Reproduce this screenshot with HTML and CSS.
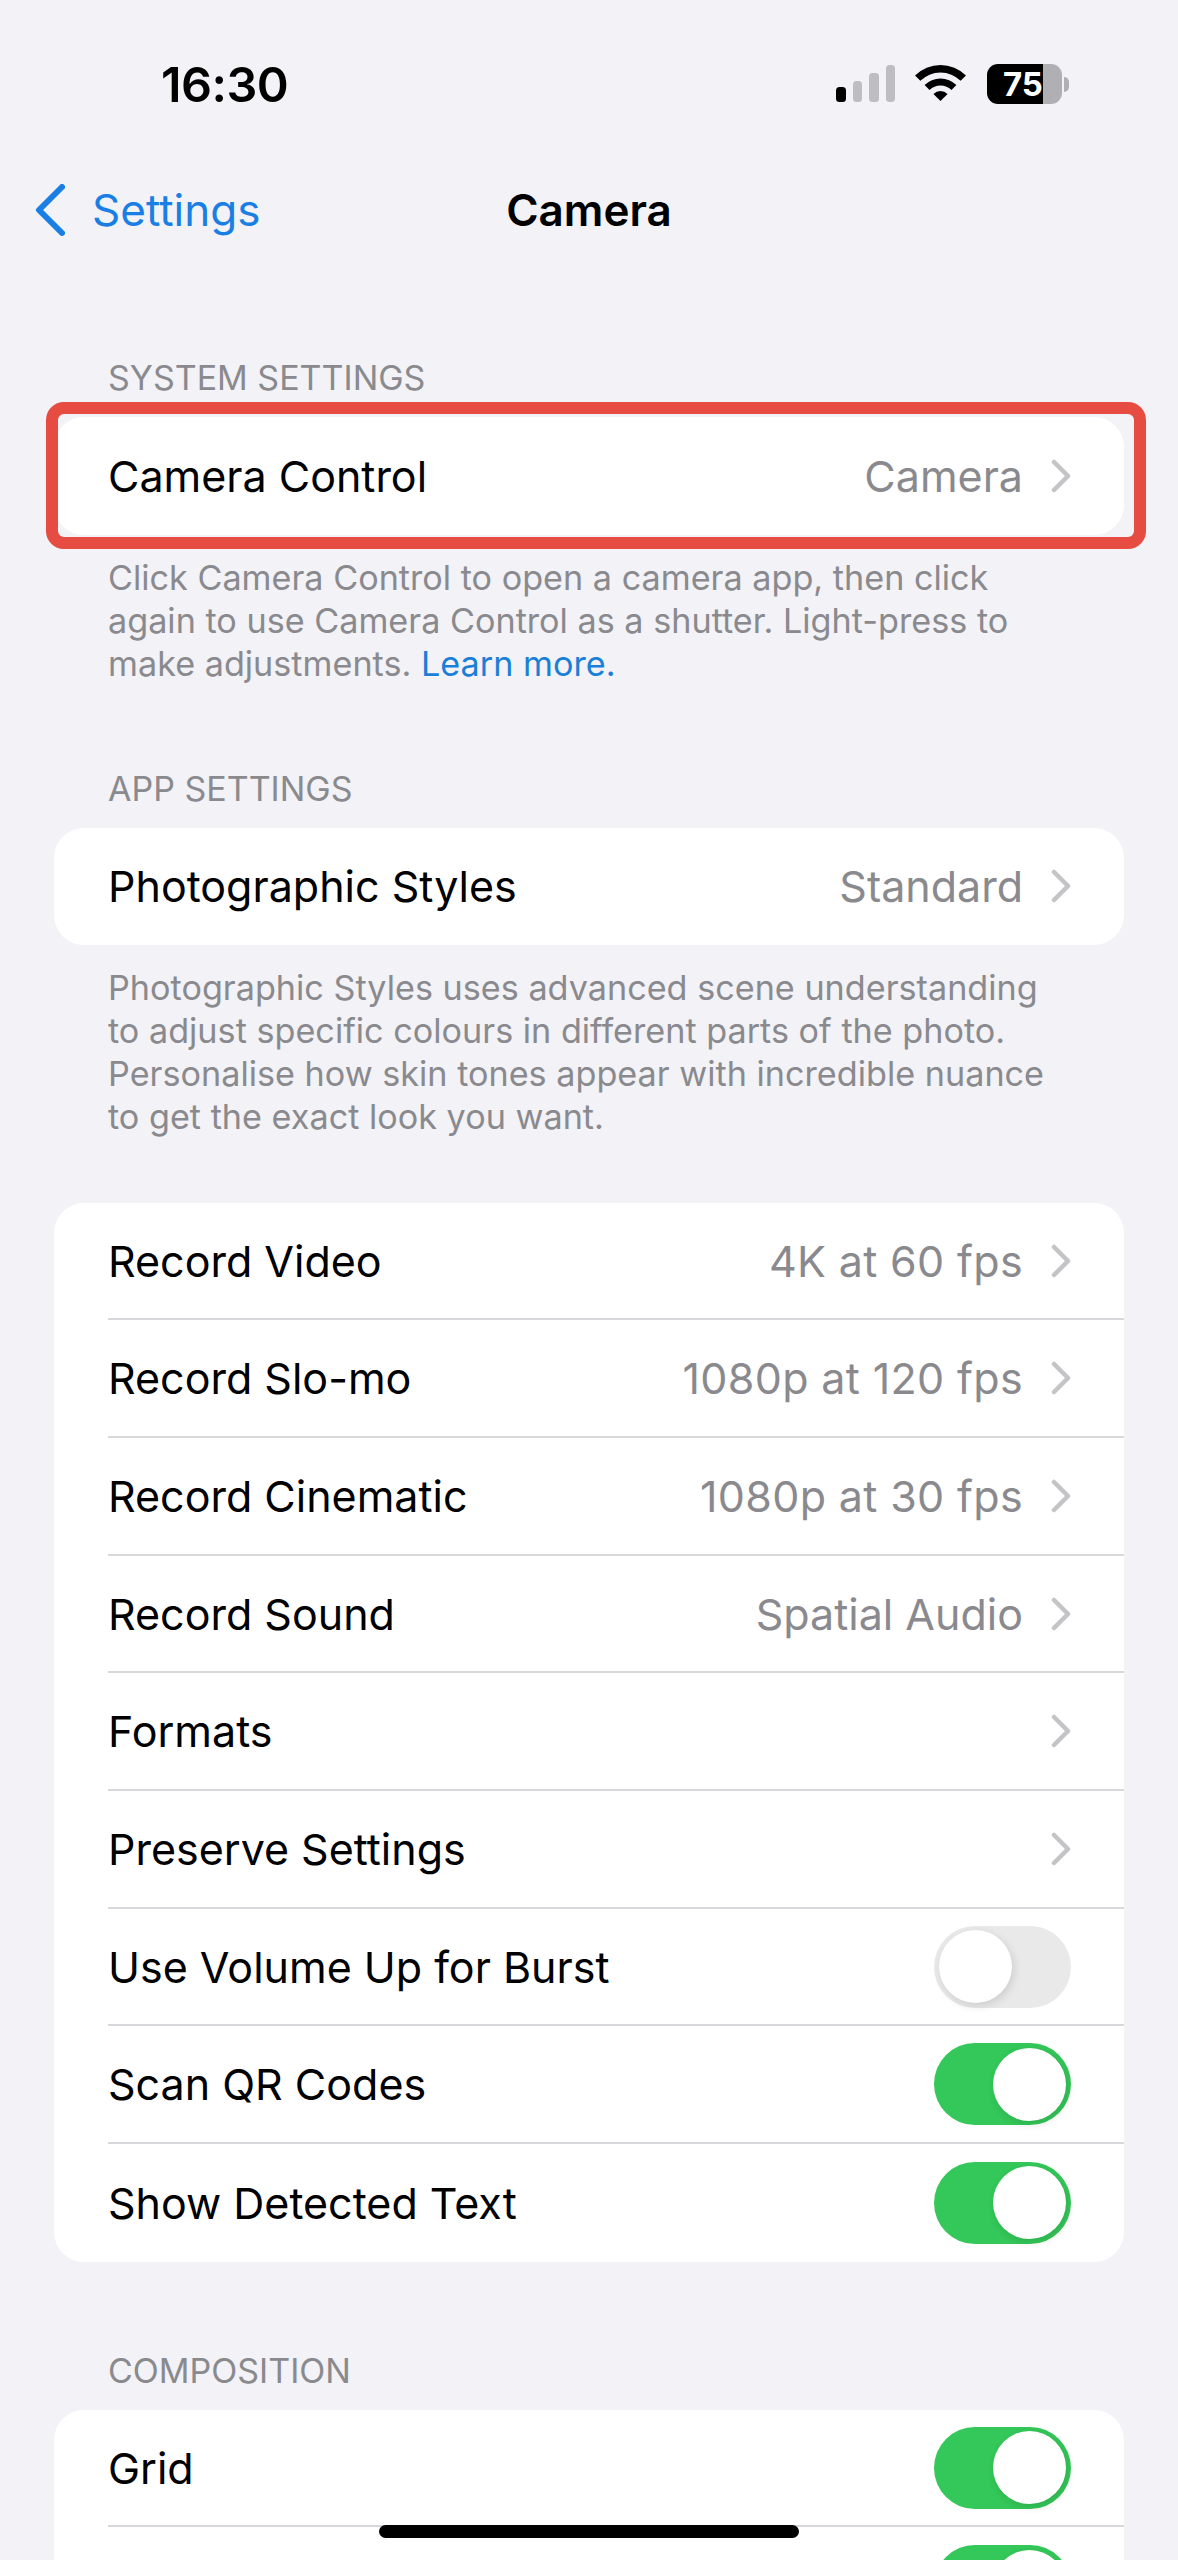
FILE: index.html
```html
<!DOCTYPE html>
<html lang="en">
<head>
<meta charset="utf-8">
<title>Camera</title>
<link rel="stylesheet" href="styles.css">
</head>
<body>
<div class="screen">
  <header class="status">
    <span class="time">16:30</span>
    <div class="status-icons">
      <div class="signal">
        <span class="bar bar-1"></span><span class="bar bar-2"></span><span class="bar bar-3"></span><span class="bar bar-4"></span>
      </div>
      <svg class="wifi" viewBox="0 0 51 37" aria-hidden="true">
        <path d="M0.04 11.54A36 36 0 0 1 50.96 11.54L45.65 16.85A28.5 28.5 0 0 0 5.35 16.85Z"/>
        <path d="M9.6 21.1A22.5 22.5 0 0 1 41.4 21.1L36.46 26.04A15.5 15.5 0 0 0 14.54 26.04Z"/>
        <path d="M18.43 29.93A10 10 0 0 1 32.57 29.93L25.5 37Z"/>
      </svg>
      <div class="battery"><span class="battery-level">75</span></div>
      <span class="battery-nub"></span>
    </div>
  </header>
  <nav class="nav">
    <a class="back">
      <svg class="back-icon" viewBox="0 0 30 52" aria-hidden="true"><path d="M27 3 4 26l23 23"/></svg>
      <span>Settings</span>
    </a>
    <h1 class="title">Camera</h1>
  </nav>
  <main class="content">
    <section class="group group-system">
      <h2 class="group-title">SYSTEM SETTINGS</h2>
      <div class="card">
        <div class="row"><div class="row-inner"><span class="label">Camera Control</span><span class="value">Camera</span><svg class="chev" viewBox="0 0 20 34" aria-hidden="true"><path d="M3 3l14 14L3 31"/></svg></div></div>
      </div>
      <p class="note">Click Camera Control to open a camera app, then click<br>again to use Camera Control as a shutter. Light-press to<br>make adjustments. <a class="link">Learn more.</a></p>
    </section>
    <section class="group group-app">
      <h2 class="group-title">APP SETTINGS</h2>
      <div class="card">
        <div class="row"><div class="row-inner"><span class="label">Photographic Styles</span><span class="value">Standard</span><svg class="chev" viewBox="0 0 20 34" aria-hidden="true"><path d="M3 3l14 14L3 31"/></svg></div></div>
      </div>
      <p class="note">Photographic Styles uses advanced scene understanding<br>to adjust specific colours in different parts of the photo.<br>Personalise how skin tones appear with incredible nuance<br>to get the exact look you want.</p>
    </section>
    <section class="group group-record">
      <div class="card">
        <div class="row"><div class="row-inner"><span class="label">Record Video</span><span class="value numeric">4K at 60 fps</span><svg class="chev" viewBox="0 0 20 34" aria-hidden="true"><path d="M3 3l14 14L3 31"/></svg></div></div>
        <div class="row"><div class="row-inner"><span class="label">Record Slo-mo</span><span class="value numeric">1080p at 120 fps</span><svg class="chev" viewBox="0 0 20 34" aria-hidden="true"><path d="M3 3l14 14L3 31"/></svg></div></div>
        <div class="row"><div class="row-inner"><span class="label">Record Cinematic</span><span class="value numeric">1080p at 30 fps</span><svg class="chev" viewBox="0 0 20 34" aria-hidden="true"><path d="M3 3l14 14L3 31"/></svg></div></div>
        <div class="row"><div class="row-inner"><span class="label">Record Sound</span><span class="value">Spatial Audio</span><svg class="chev" viewBox="0 0 20 34" aria-hidden="true"><path d="M3 3l14 14L3 31"/></svg></div></div>
        <div class="row"><div class="row-inner"><span class="label">Formats</span><svg class="chev" viewBox="0 0 20 34" aria-hidden="true"><path d="M3 3l14 14L3 31"/></svg></div></div>
        <div class="row"><div class="row-inner"><span class="label">Preserve Settings</span><svg class="chev" viewBox="0 0 20 34" aria-hidden="true"><path d="M3 3l14 14L3 31"/></svg></div></div>
        <div class="row"><div class="row-inner"><span class="label">Use Volume Up for Burst</span><span class="toggle"><span class="knob"></span></span></div></div>
        <div class="row"><div class="row-inner"><span class="label">Scan QR Codes</span><span class="toggle on"><span class="knob"></span></span></div></div>
        <div class="row"><div class="row-inner"><span class="label">Show Detected Text</span><span class="toggle on"><span class="knob"></span></span></div></div>
      </div>
    </section>
    <section class="group group-composition">
      <h2 class="group-title">COMPOSITION</h2>
      <div class="card">
        <div class="row"><div class="row-inner"><span class="label">Grid</span><span class="toggle on"><span class="knob"></span></span></div></div>
        <div class="row"><div class="row-inner row-end"><span class="toggle on"><span class="knob"></span></span></div></div>
      </div>
    </section>
  </main>
  <div class="highlight"></div>
  <div class="home-indicator"></div>
</div>
</body>
</html>
```
FILE: styles.css
```css
* { box-sizing: border-box; }
html, body { margin: 0; padding: 0; }
body { width: 1178px; height: 2560px; overflow: hidden; background: #f2f2f7; font-family: Inter, "Liberation Sans", sans-serif; color: #000; }
.screen { position: relative; width: 1178px; height: 2560px; overflow: hidden; background: #f2f2f7; }

.status { height: 140px; padding: 0 109px 0 161px; display: flex; justify-content: space-between; align-items: flex-start; }
.time { margin-top: 56px; font-size: 48.5px; line-height: 58px; font-weight: 600; letter-spacing: -0.5px; }
.status-icons { margin-top: 64px; display: flex; align-items: flex-start; }
.signal { display: flex; align-items: flex-end; gap: 7px; height: 38px; margin-right: 20px; }
.bar { display: block; width: 9.5px; border-radius: 3.5px; background: #bdbdc2; }
.bar-1 { height: 15px; background: #000; }
.bar-2 { height: 21px; }
.bar-3 { height: 29px; }
.bar-4 { height: 37px; }
.wifi { width: 51px; height: 37px; margin-right: 21px; fill: #000; }
.battery { width: 75px; height: 40px; border-radius: 11px; overflow: hidden; background: linear-gradient(90deg, #000 0, #000 56px, #b0b0b4 56px, #b0b0b4 100%); }
.battery-level { display: block; padding-left: 16px; font-size: 33px; line-height: 40px; font-weight: 700; color: #fff; }
.battery-nub { width: 5px; height: 15px; margin: 13px 0 0 2px; border-radius: 0 5px 5px 0; background: #b0b0b4; }

.nav { position: relative; height: 140px; display: flex; align-items: center; justify-content: center; }
.back { position: absolute; left: 35px; top: 44px; display: flex; align-items: center; gap: 27px; font-size: 44px; line-height: 52px; color: #1a7fe4; }
.back-icon { width: 30px; height: 52px; fill: none; stroke: #1a7fe4; stroke-width: 6; stroke-linecap: round; stroke-linejoin: round; }
.title { margin: 0; font-size: 44px; line-height: 52px; font-weight: 600; }

.content { padding: 0 54px; }
.group-title { margin: 0 0 20px; padding-left: 54px; height: 40px; font-size: 34px; line-height: 42px; font-weight: 400; color: #8a8a8e; }
.group-system { padding-top: 77px; }
.group-app { padding-top: 83px; }
.group-record { padding-top: 64.5px; }
.group-composition { padding-top: 88px; }
.card { background: #fff; border-radius: 30px; overflow: hidden; }
.row { height: 117.67px; padding-left: 54px; }
.row-inner { height: 100%; display: flex; align-items: center; padding-right: 53px; border-bottom: 2px solid #d8d8dc; }
.row:last-child .row-inner { border-bottom: 0; }
.row-end { justify-content: flex-end; }
.label { flex: 1; font-size: 43px; line-height: 52px; }
.value { font-size: 43px; line-height: 52px; color: #8a8a8e; margin-right: 28px; }
.numeric { letter-spacing: 0.35px; }
.chev { width: 20px; height: 34px; fill: none; stroke: #c4c4c7; stroke-width: 4.5; stroke-linecap: round; stroke-linejoin: round; }
.toggle { position: relative; display: block; width: 137px; height: 82px; border-radius: 41px; background: #e9e9ea; }
.toggle.on { background: #34c759; }
.knob { position: absolute; left: 5px; top: 4.5px; width: 73px; height: 73px; border-radius: 50%; background: #fff; box-shadow: 2px 3px 8px rgba(0, 0, 0, 0.12); }
.toggle.on .knob { left: 59px; }
.note { margin: 21px 0 0; padding: 0 54px; font-size: 34.2px; line-height: 43px; color: #8a8a8e; }
.link { color: #1a7fd6; }

.highlight { position: absolute; left: 46px; top: 402px; width: 1100px; height: 147px; border: 12px solid #e74c43; border-radius: 18px; }
.home-indicator { position: absolute; left: 379px; top: 2525px; width: 420px; height: 13px; border-radius: 7px; background: #000; }
```
